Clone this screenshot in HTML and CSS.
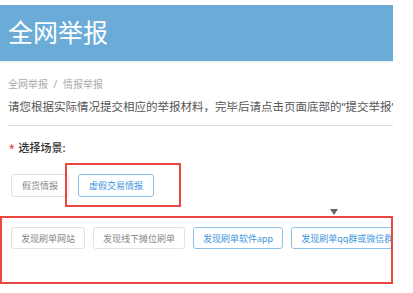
FILE: index.html
```html
<!DOCTYPE html>
<html lang="zh-CN">
<head>
    <meta charset="UTF-8">
    <meta name="viewport" content="width=device-width, initial-scale=1.0">
    <title>全网举报</title>
    <link rel="stylesheet" href="styles.css">
</head>
<body>
    <div class="page">
        <div class="header">全网举报</div>
        <div class="content">
            <div class="crumb">全网举报 <span class="sep">/</span> 情报举报</div>
            <div class="intro">请您根据实际情况提交相应的举报材料，完毕后请点击页面底部的“提交举报”按钮</div>
            <div class="field-label"><span class="star">*</span>选择场景:</div>
            <div class="row row-first">
                <button type="button" class="opt">假货情报</button>
                <button type="button" class="opt active">虚假交易情报</button>
                <div class="mark mark-first"></div>
            </div>
            <div class="arrow-line"><span class="arrow"></span></div>
        </div>
        <div class="sub-box">
            <div class="row">
                <button type="button" class="opt">发现刷单网站</button>
                <button type="button" class="opt">发现线下摊位刷单</button>
                <button type="button" class="opt active">发现刷单软件app</button>
                <button type="button" class="opt active">发现刷单qq群或微信群</button>
            </div>
        </div>
    </div>
</body>
</html>
```

FILE: styles.css
```css
body {
    margin: 0;
    background: #fff;
    font-family: "Noto Sans", "Noto Sans CJK SC", sans-serif;
}
.page {
    width: 393px;
    overflow: hidden;
    padding-top: 5px;
}
.header {
    height: 56px;
    line-height: 54px;
    padding-left: 8px;
    background-color: #6aabd7;
    color: #fff;
    font-size: 25px;
    border-bottom: 1px solid #ececec;
}
.content {
    padding: 0 0 0 8px;
}
.crumb {
    margin-top: 15px;
    font-size: 10px;
    line-height: 14px;
    color: #aaa;
}
.sep {
    margin: 0 3px;
}
.intro {
    margin-top: 8px;
    padding-bottom: 10px;
    font-size: 11.5px;
    line-height: 16px;
    color: #555;
    white-space: nowrap;
    border-bottom: 1px solid #dedede;
}
.field-label {
    margin-top: 14px;
    font-size: 11px;
    line-height: 15px;
    font-weight: 500;
    color: #333;
}
.star {
    color: #e4393c;
    font-size: 10px;
    margin-right: 4px;
    margin-left: 1px;
}
.row {
    display: flex;
    gap: 8px;
    white-space: nowrap;
}
.row-first {
    position: relative;
    margin-top: 18px;
    padding-left: 3px;
    gap: 9px;
}
.opt {
    flex: none;
    height: 23px;
    padding: 0 10px;
    background: #fff;
    border: 1px solid #e2e2e2;
    border-radius: 3px;
    font-family: inherit;
    font-size: 9px;
    color: #888;
}
.opt.active {
    border-color: #8ec1ea;
    color: #3d95e0;
}
.mark {
    position: absolute;
    border: 2px solid #e8463e;
}
.mark-first {
    left: 57px;
    top: -11px;
    width: 112px;
    height: 40px;
}
.arrow-line {
    height: 19px;
    padding-left: 322px;
    padding-top: 12px;
    box-sizing: border-box;
}
.arrow {
    display: block;
    width: 0;
    height: 0;
    border-left: 4px solid transparent;
    border-right: 4px solid transparent;
    border-top: 6px solid #666;
}
.sub-box {
    height: 68px;
    box-sizing: border-box;
    padding: 9px 0 0 9px;
    border: 2px solid #e8463e;
    overflow: hidden;
}
.sub-box .opt {
    height: 22px;
    padding: 0 9px;
}
```
